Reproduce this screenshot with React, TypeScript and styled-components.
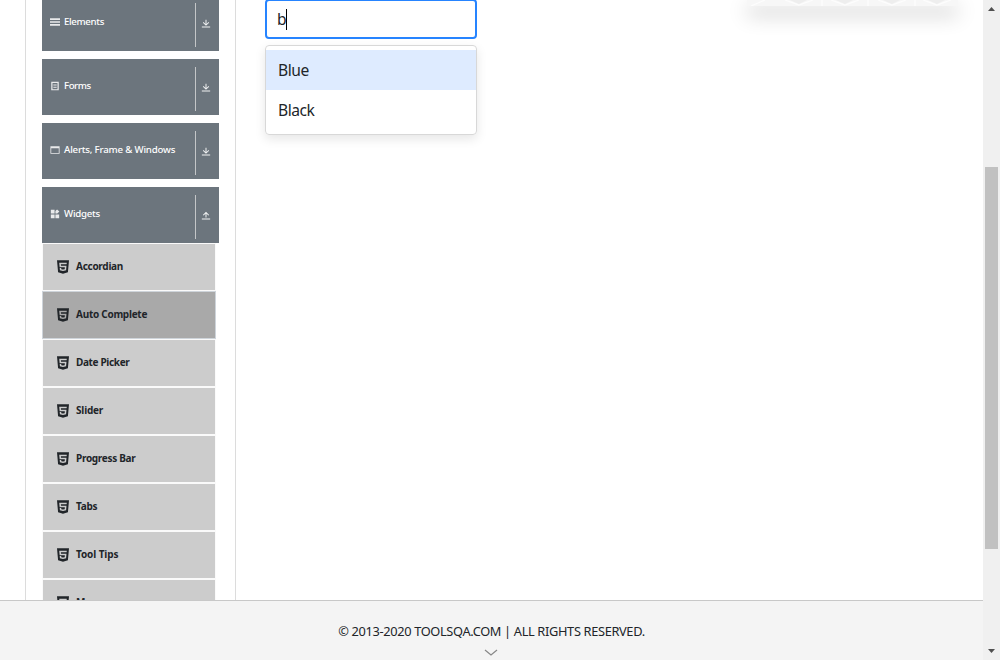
import React from "react";
import styled, { createGlobalStyle } from "styled-components";

const GlobalStyle = createGlobalStyle`
  * { box-sizing: border-box; }
  body { margin: 0; background: #fff; overflow: hidden; }
  svg { display: block; }
`;

const Screen = styled.div`
  display: flex;
  width: 1000px;
  height: 660px;
  overflow: hidden;
  font-family: "Noto Sans", "Open Sans", sans-serif;
  color: #212529;
`;

const Page = styled.div`
  display: flex;
  flex-direction: column;
  width: 983px;
`;

const Main = styled.main`
  display: flex;
  height: 600px;
  overflow: hidden;
`;

const Sidebar = styled.aside`
  width: 211px;
  height: 620px;
  margin-left: 25px;
  padding-left: 16px;
  border-left: 1px solid #dcdcdc;
  border-right: 1px solid #dcdcdc;
`;

const Groups = styled.div`
  display: flex;
  flex-direction: column;
  gap: 8px;
  margin-top: -5px;
`;

const GroupHeader = styled.div`
  display: flex;
  width: 177px;
  height: 56px;
  padding: 8px 0 4px 8px;
  background: #6c757d;
  color: #fff;
`;

const Label = styled.span<{ $size: number; $spacing: number; $weight?: number }>`
  font-size: ${(p) => p.$size}px;
  font-weight: ${(p) => p.$weight ?? 400};
  letter-spacing: ${(p) => p.$spacing}px;
  white-space: nowrap;
`;

const GroupTitle = styled.div`
  display: flex;
  align-items: center;
  gap: 4px;
  width: 145px;
  height: 20px;
  margin-top: 9px;
  svg { width: 10px; height: 10px; opacity: 0.85; }
  ${Label} { padding-bottom: 2px; }
`;

const Toggle = styled.div`
  height: 44px;
  padding: 15px 0 0 5px;
  border-left: 1px solid #c4c6c8;
  svg { width: 10px; height: 11px; opacity: 0.9; }
`;

const MenuItem = styled.div<{ $active?: boolean }>`
  display: flex;
  align-items: center;
  gap: 5px;
  width: 174px;
  height: 48px;
  padding: 0 0 0 12px;
  border: 1px solid ${(p) => (p.$active ? "#ced4da" : "#fafafa")};
  background: ${(p) => (p.$active ? "#a9a9a9" : "#ccc")};
  svg { width: 16px; height: 16px; }
  ${Label} { padding-bottom: 2px; }
`;

const Content = styled.section`
  flex: 1;
  padding-left: 29px;
`;

const Field = styled.div`
  display: flex;
  align-items: center;
  width: 212px;
  height: 40px;
  margin-top: -1px;
  padding-left: 10px;
  border: 2px solid #2684ff;
  border-radius: 4px;
`;

const Caret = styled.i`
  width: 1px;
  height: 21px;
  background: #000;
`;

const Menu = styled.div`
  width: 212px;
  height: 90px;
  margin-top: 6px;
  padding: 4px 0;
  border: 1px solid #d8d8d8;
  border-radius: 4px;
  box-shadow: 0 4px 11px rgba(0, 0, 0, 0.1);
`;

const Option = styled.div<{ $focused?: boolean }>`
  height: 40px;
  padding-left: 12px;
  line-height: 41px;
  background: ${(p) => (p.$focused ? "#deebff" : "transparent")};
`;

const AdCard = styled.div`
  width: 211px;
  height: 6px;
  margin-right: 25px;
  background: #f7f7f7;
  box-shadow: 0 8px 20px rgba(0, 0, 0, 0.3);
`;

const Footer = styled.footer`
  display: flex;
  flex-direction: column;
  align-items: center;
  height: 60px;
  padding-top: 18px;
  border-top: 1px solid #c8c8c8;
  background: #f4f4f4;
`;

const Copyright = styled.div`
  height: 22px;
  line-height: 22px;
`;

const ChevronRow = styled.div`
  margin: 8px 2px 0 0;
`;

const ScrollTrack = styled.div`
  display: flex;
  flex-direction: column;
  align-items: center;
  justify-content: space-between;
  width: 17px;
  padding: 7px 2px 7px;
  background: #f0f0f0;
`;

const ScrollThumb = styled.div`
  width: 13px;
  height: 382px;
  margin-top: 55px;
  background: #c1c1c1;
`;

const Icon = ({ d }: { d: string }) => (
  <svg viewBox="0 0 24 24" fill="currentColor"><path fillRule="evenodd" d={d} /></svg>
);

const paths = {
  bars: "M0 3h24v4H0zM0 10h24v4H0zM0 17h24v4H0z",
  form: "M3 2h18v20H3zM6 4.5v15h12V4.5zM8 7h8v1.5H8zM8 11h8v1.5H8zM8 15h8v1.5H8z",
  window: "M1 3h22v18H1zM3 8v11h18V8z",
  widgets: "M2 2h9v9H2zM13 5l4-4 5.5 5-5 5H13zM2 13h9v9H2zM13 13h9v9h-9z",
  down: "M2 19h20v2.5H2v-2.5zm11.2-5.828L18 8.5l1.6 1.6L12 17.5 4.4 10.1 6 8.5 10.8 13.17V3h2.4v10.172z",
  up: "M2 19h20v2.5H2v-2.5zM13.2 7.5V17h-2.4V7.5L6 12.2l-1.6-1.6L12 3l7.6 7.6-1.6 1.6z",
  html5: "M12 18.178l4.62-1.256.623-6.778H9.026L8.822 7.89h8.626l.227-2.211H6.325l.636 6.678h7.82l-.261 2.866-2.52.667-2.52-.667-.158-1.844h-2.27l.329 3.544L12 18.178zM3 2h18l-1.623 18L12 22l-7.377-2L3 2z",
};

const groups = [
  { title: "Elements", icon: paths.bars, spacing: -0.35 },
  { title: "Forms", icon: paths.form, spacing: -0.46 },
  { title: "Alerts, Frame & Windows", icon: paths.window, spacing: -0.2 },
  { title: "Widgets", icon: paths.widgets, spacing: -0.24, open: true },
];

const items = [
  { name: "Accordian", spacing: -0.28 },
  { name: "Auto Complete", spacing: -0.27 },
  { name: "Date Picker", spacing: -0.35 },
  { name: "Slider", spacing: -0.18 },
  { name: "Progress Bar", spacing: -0.3 },
  { name: "Tabs", spacing: -0.25 },
  { name: "Tool Tips", spacing: -0.1 },
  { name: "Menu", spacing: -0.25 },
];

export default function App() {
  return (
    <Screen>
      <GlobalStyle />
      <Page>
        <Main>
          <Sidebar>
            <Groups>
              {groups.map((g) => (
                <GroupHeader key={g.title}>
                  <GroupTitle>
                    <Icon d={g.icon} />
                    <Label $size={9.7} $spacing={g.spacing} $weight={500}>{g.title}</Label>
                  </GroupTitle>
                  <Toggle><Icon d={g.open ? paths.up : paths.down} /></Toggle>
                </GroupHeader>
              ))}
            </Groups>
            {items.map((item) => (
              <MenuItem key={item.name} $active={item.name === "Auto Complete"}>
                <Icon d={paths.html5} />
                <Label $size={10} $spacing={item.spacing} $weight={700}>{item.name}</Label>
              </MenuItem>
            ))}
          </Sidebar>
          <Content>
            <Field>
              <Label $size={15.6} $spacing={-0.6}>b</Label>
              <Caret />
            </Field>
            <Menu>
              <Option $focused><Label $size={15.6} $spacing={-0.45}>Blue</Label></Option>
              <Option><Label $size={15.6} $spacing={-0.45}>Black</Label></Option>
            </Menu>
          </Content>
          <AdCard>
            <svg width="211" height="6" fill="none" stroke="#fdfdfd" strokeWidth="1.2">
              <path fill="#eee" stroke="none" d="M43 0h17l-8 4zM89 0h17l-8 4zM136 0h17l-8 4zM181 0h17l-8 4z" />
              <path d="M4 6L18 0M38 0L52 5L66 0M84 0L98 5L112 0M131 0L145 5L159 0M176 0L190 5L204 0M75 0v6M121 0v6M168 0v6" />
            </svg>
          </AdCard>
        </Main>
        <Footer>
          <Copyright><Label $size={12.8} $spacing={-0.34}>© 2013-2020 TOOLSQA.COM | ALL RIGHTS RESERVED.</Label></Copyright>
          <ChevronRow>
            <svg width="14" height="8" fill="none" stroke="#888" strokeWidth="1.2"><path d="M1 1l6 5 6-5" /></svg>
          </ChevronRow>
        </Footer>
      </Page>
      <ScrollTrack>
        <svg width="7" height="4" fill="#505050"><path d="M0 4L3.5 0L7 4z" /></svg>
        <ScrollThumb />
        <svg width="7" height="4" fill="#505050"><path d="M0 0h7L3.5 4z" /></svg>
      </ScrollTrack>
    </Screen>
  );
}
